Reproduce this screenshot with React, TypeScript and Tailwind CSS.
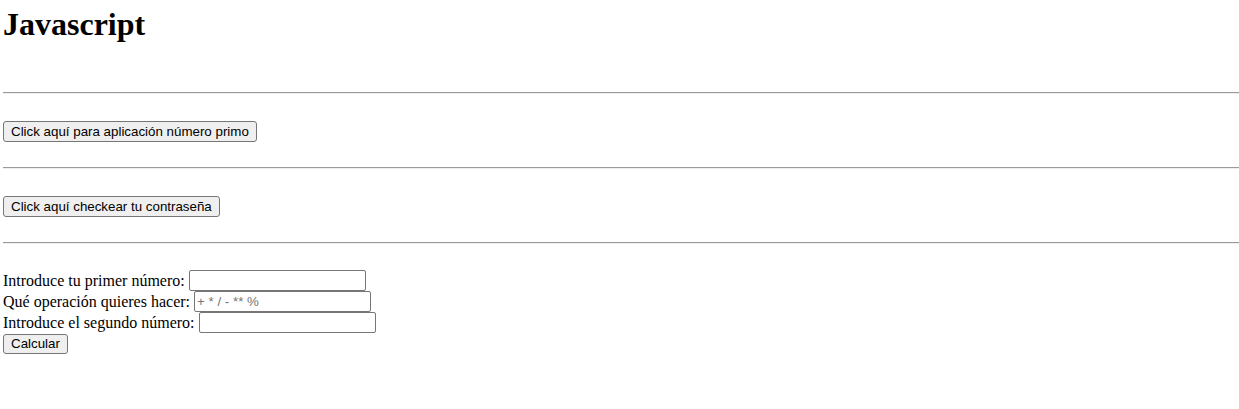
export default function App() {
  const btn =
    "block h-[21px] px-[7px] bg-[#efefef] border border-[#767676] rounded-[3px] text-[13.333px] text-black leading-none font-['Liberation_Sans',Arial,sans-serif]";
  const input =
    "h-[21px] w-[177px] ml-[4px] px-[2px] py-[1px] border border-[#767676] rounded-[2px] bg-white text-[13.333px] font-['Liberation_Sans',Arial,sans-serif] placeholder:text-[#757575] outline-none";
  const hr = "h-0 border-t border-b border-t-[#9a9a9a] border-b-[#eeeeee]";

  return (
    <div className="min-h-screen bg-white pl-[3px] text-black text-[16px] font-['Liberation_Serif','Times_New_Roman',serif]">
      <h1 className="mt-[6px] text-[32px] font-bold leading-[37px]">Javascript</h1>

      <div className={`${hr} mt-[49px]`} />
      <button className={`${btn} mt-[27px]`}>Click aquí para aplicación número primo</button>

      <div className={`${hr} mt-[25px]`} />
      <button className={`${btn} mt-[27px]`}>Click aquí checkear tu contraseña</button>

      <div className={`${hr} mt-[25px]`} />

      <div className="mt-[26px]">
        <div className="flex h-[21px] items-center">
          <span>Introduce tu primer número:</span>
          <input className={input} type="text" />
        </div>
        <div className="flex h-[21px] items-center">
          <span>Qué operación quieres hacer:</span>
          <input className={input} type="text" placeholder="+ * / - ** %" />
        </div>
        <div className="flex h-[21px] items-center">
          <span>Introduce el segundo número:</span>
          <input className={input} type="text" />
        </div>
        <button className={`${btn} mt-px !h-[20px]`}>Calcular</button>
      </div>
    </div>
  );
}
